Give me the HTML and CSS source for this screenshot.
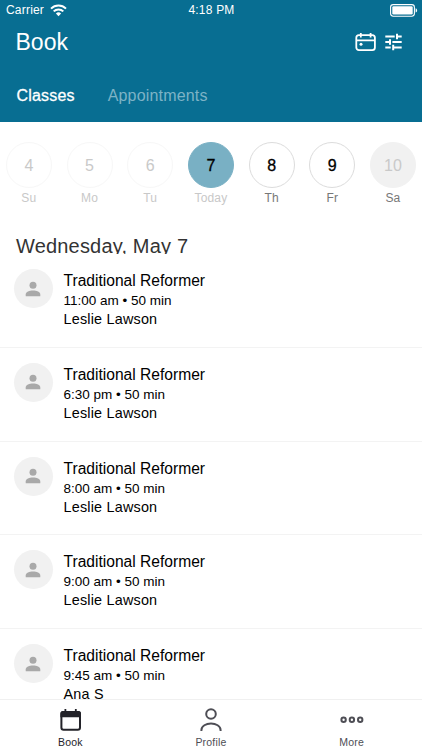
FILE: index.html
```
<!DOCTYPE html>
<html lang="en">
<head>
  <meta charset="UTF-8">
  <meta name="viewport" content="width=device-width, initial-scale=1.0">
  <title>Book</title>
  <link rel="stylesheet" href="styles.css">
</head>
<body>
  <div class="app">
    <header class="header">
      <div class="status-bar">
        <div class="carrier">
          <span>Carrier</span>
          <svg width="17" height="13" viewBox="0 0 17 13" fill="none" stroke="#fff" stroke-width="2">
            <path d="M1 4.6a10.6 10.6 0 0 1 15 0"/>
            <path d="M3.7 7.4a6.8 6.8 0 0 1 9.6 0"/>
            <path d="M8.5 12.2L5.9 9.6a3.7 3.7 0 0 1 5.2 0z" fill="#fff" stroke="none"/>
          </svg>
        </div>
        <span class="clock">4:18 PM</span>
        <svg class="battery" width="28" height="13" viewBox="0 0 28 13">
          <rect x="0.6" y="0.6" width="23.8" height="11.6" rx="2.6" fill="none" stroke="#fff" stroke-width="1.1"/>
          <rect x="2.3" y="2.3" width="20.4" height="8.2" rx="1.2" fill="#fff"/>
          <path d="M25.6 4.2c2 .7 2 3.7 0 4.4z" fill="#fff"/>
        </svg>
      </div>
      <div class="title-bar">
        <h1>Book</h1>
        <div class="actions">
          <svg width="22" height="20" viewBox="0 0 22 20" fill="none" stroke="#fff" stroke-width="1.8">
            <rect x="1.3" y="3.2" width="18.6" height="15" rx="2.6"/>
            <path d="M1.3 8.4h18.6M5.8 1v4.4M15.6 1v4.4"/>
            <circle cx="6" cy="12.3" r="1.5" fill="#fff" stroke="none"/>
          </svg>
          <svg width="17" height="20" viewBox="0 0 17 20" fill="none" stroke="#fff" stroke-width="2">
            <path d="M.3 4.5h9.4M12 4.5h4.7M12 1.8v5.4M.3 10h5M7.4 10h9.3M5 7.3v5.4M.3 15.5h5.4M7.8 15.5h8.9M8.2 12.8v5.4"/>
          </svg>
        </div>
      </div>
      <nav class="tabs">
        <a class="active">Classes</a>
        <a>Appointments</a>
      </nav>
    </header>

    <section class="days">
      <div class="day past"><span class="num">4</span><span class="name">Su</span></div>
      <div class="day past"><span class="num">5</span><span class="name">Mo</span></div>
      <div class="day past"><span class="num">6</span><span class="name">Tu</span></div>
      <div class="day today"><span class="num">7</span><span class="name">Today</span></div>
      <div class="day"><span class="num">8</span><span class="name">Th</span></div>
      <div class="day"><span class="num">9</span><span class="name">Fr</span></div>
      <div class="day closed"><span class="num">10</span><span class="name">Sa</span></div>
    </section>

    <main class="schedule">
      <h2>Wednesday, May 7</h2>
      <ul class="class-list">
        <li>
          <span class="avatar"><svg width="16" height="16" viewBox="0 0 16 16"><circle cx="8" cy="4.2" r="3.5"/><path d="M.7 15.2v-1.6c0-5.4 14.6-5.4 14.6 0v1.6z"/></svg></span>
          <div class="info">
            <h3>Traditional Reformer</h3>
            <p class="time">11:00 am • 50 min</p>
            <p class="teacher">Leslie Lawson</p>
          </div>
        </li>
        <li>
          <span class="avatar"><svg width="16" height="16" viewBox="0 0 16 16"><circle cx="8" cy="4.2" r="3.5"/><path d="M.7 15.2v-1.6c0-5.4 14.6-5.4 14.6 0v1.6z"/></svg></span>
          <div class="info">
            <h3>Traditional Reformer</h3>
            <p class="time">6:30 pm • 50 min</p>
            <p class="teacher">Leslie Lawson</p>
          </div>
        </li>
        <li>
          <span class="avatar"><svg width="16" height="16" viewBox="0 0 16 16"><circle cx="8" cy="4.2" r="3.5"/><path d="M.7 15.2v-1.6c0-5.4 14.6-5.4 14.6 0v1.6z"/></svg></span>
          <div class="info">
            <h3>Traditional Reformer</h3>
            <p class="time">8:00 am • 50 min</p>
            <p class="teacher">Leslie Lawson</p>
          </div>
        </li>
        <li>
          <span class="avatar"><svg width="16" height="16" viewBox="0 0 16 16"><circle cx="8" cy="4.2" r="3.5"/><path d="M.7 15.2v-1.6c0-5.4 14.6-5.4 14.6 0v1.6z"/></svg></span>
          <div class="info">
            <h3>Traditional Reformer</h3>
            <p class="time">9:00 am • 50 min</p>
            <p class="teacher">Leslie Lawson</p>
          </div>
        </li>
        <li>
          <span class="avatar"><svg width="16" height="16" viewBox="0 0 16 16"><circle cx="8" cy="4.2" r="3.5"/><path d="M.7 15.2v-1.6c0-5.4 14.6-5.4 14.6 0v1.6z"/></svg></span>
          <div class="info">
            <h3>Traditional Reformer</h3>
            <p class="time">9:45 am • 50 min</p>
            <p class="teacher">Ana S</p>
          </div>
        </li>
      </ul>
    </main>

    <footer class="tab-bar">
      <a class="active">
        <svg width="24" height="24" viewBox="0 0 24 24">
          <rect x="3.4" y="4" width="18.6" height="17.8" rx="2.2" fill="none" stroke="#232329" stroke-width="2"/>
          <path d="M2.4 9.3V5.5A2.5 2.5 0 0 1 4.9 3h15.6A2.5 2.5 0 0 1 23 5.5v3.8z" fill="#232329"/>
          <path d="M7.4 1v4M17.8 1v4" stroke="#232329" stroke-width="1.8"/>
        </svg>
        <span>Book</span>
      </a>
      <a>
        <svg width="24" height="24" viewBox="0 0 24 24" fill="none" stroke="#4e4e55" stroke-width="2">
          <circle cx="12" cy="6" r="4.8"/>
          <path d="M2.4 23v-.8c0-8.8 19.2-8.8 19.2 0v.8"/>
        </svg>
        <span>Profile</span>
      </a>
      <a>
        <svg width="24" height="24" viewBox="0 0 24 24" fill="none" stroke="#4e4e55" stroke-width="2">
          <circle cx="3.6" cy="11.8" r="2.2"/>
          <circle cx="11.9" cy="11.8" r="2.2"/>
          <circle cx="20.2" cy="11.8" r="2.2"/>
        </svg>
        <span>More</span>
      </a>
    </footer>
  </div>
</body>
</html>
```
FILE: styles.css
```
* {
  box-sizing: border-box;
}

body {
  margin: 0;
  font-family: "Liberation Sans", Arial, sans-serif;
  background: #fff;
  color: #000;
}

h1, h2, h3, p, ul {
  margin: 0;
  padding: 0;
  font-weight: normal;
}

svg {
  display: block;
}

.app {
  display: flex;
  flex-direction: column;
  height: 750px;
  overflow: hidden;
}

/* Header */
.header {
  flex: none;
  height: 122px;
  background: #086e92;
  color: #fff;
}

.status-bar {
  display: grid;
  grid-template-columns: 1fr auto 1fr;
  align-items: center;
  height: 20px;
  padding: 0 4px 0 6px;
  font-size: 12px;
  letter-spacing: 0.2px;
}

.carrier {
  display: flex;
  align-items: center;
  gap: 6px;
}

.clock {
  padding-right: 1px;
}

.battery {
  justify-self: end;
}

.title-bar {
  display: flex;
  justify-content: space-between;
  align-items: center;
  height: 44px;
  padding: 0 20px 0 15.5px;
}

h1 {
  padding-top: 1px;
  font-size: 23px;
}

.actions {
  display: flex;
  gap: 8px;
}

.tabs {
  display: flex;
  gap: 33px;
  height: 58px;
  padding: 22px 16.5px 0;
  font-size: 16px;
  line-height: 20px;
  letter-spacing: 0.18px;
}

.tabs a {
  color: #7db3c6;
}

.tabs .active {
  color: #fff;
  -webkit-text-stroke: 0.3px #fff;
}

/* Day picker */
.days {
  display: grid;
  grid-template-columns: repeat(7, 60.7px);
  flex: none;
  height: 113px;
  margin-left: -1.5px;
  padding-top: 20px;
}

.day {
  display: flex;
  flex-direction: column;
  align-items: center;
}

.num {
  width: 46px;
  height: 46px;
  border: 1px solid #dcdcdc;
  border-radius: 50%;
  font-size: 16px;
  line-height: 45px;
  text-align: center;
  -webkit-text-stroke: 0.3px currentColor;
}

.name {
  margin-top: 2px;
  font-size: 12px;
  line-height: 16px;
  letter-spacing: 0.15px;
  color: #777;
}

.past .num {
  border-color: #f7f7f7;
  color: #c9c9c9;
  -webkit-text-stroke: 0;
}

.past .name, .today .name {
  color: #c8c8c8;
}

.today .num {
  border-color: #79b0c4;
  background: #79b0c4;
}

.closed .num {
  border-color: #f1f1f1;
  background: #f1f1f1;
  color: #c9c9c9;
  -webkit-text-stroke: 0;
}

/* Class list */
.schedule {
  flex: 1;
  min-height: 0;
  overflow: hidden;
}

h2 {
  height: 19px;
  padding-left: 16px;
  overflow: hidden;
  font-size: 20px;
  line-height: 23px;
  letter-spacing: 0.18px;
  color: #333;
}

.class-list {
  list-style: none;
}

.class-list li {
  display: flex;
  gap: 11px;
  height: 93.75px;
  padding: 15px 13.5px 0;
  border-bottom: 1px solid #f3f3f3;
}

.avatar {
  display: flex;
  justify-content: center;
  align-items: center;
  width: 39px;
  height: 39px;
  border-radius: 50%;
  background: #f1f1f1;
}

.avatar svg {
  fill: #a9a9a9;
}

h3 {
  font-size: 15.6px;
  line-height: 24px;
}

.time {
  font-size: 13.5px;
  line-height: 16px;
}

.teacher {
  font-size: 14.4px;
  line-height: 20px;
  letter-spacing: 0.2px;
}

/* Bottom tab bar */
.tab-bar {
  display: grid;
  grid-template-columns: repeat(3, 1fr);
  flex: none;
  height: 51px;
  border-top: 1px solid #f0f0f0;
  background: #fff;
}

.tab-bar a {
  display: flex;
  flex-direction: column;
  align-items: center;
  padding-top: 8px;
  font-size: 10.5px;
  line-height: 14px;
  letter-spacing: 0.2px;
  color: #4e4e55;
}

.tab-bar span {
  margin-top: 3px;
}

.tab-bar .active {
  color: #232329;
}
```
